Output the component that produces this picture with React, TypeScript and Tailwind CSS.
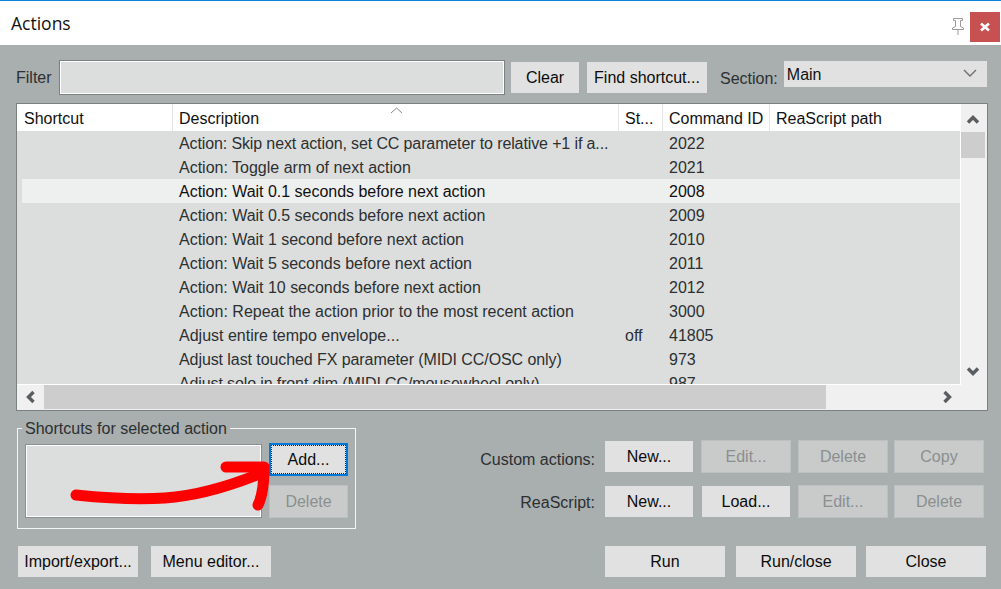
const rows = [
  { desc: "Action: Skip next action, set CC parameter to relative +1 if a...", state: "", id: "2022", fit: "tracking-[-0.12px]" },
  { desc: "Action: Toggle arm of next action", state: "", id: "2021", fit: "" },
  { desc: "Action: Wait 0.1 seconds before next action", state: "", id: "2008", fit: "tracking-[-0.02px]", selected: true },
  { desc: "Action: Wait 0.5 seconds before next action", state: "", id: "2009", fit: "tracking-[-0.02px]" },
  { desc: "Action: Wait 1 second before next action", state: "", id: "2010", fit: "tracking-[-0.02px]" },
  { desc: "Action: Wait 5 seconds before next action", state: "", id: "2011", fit: "tracking-[-0.02px]" },
  { desc: "Action: Wait 10 seconds before next action", state: "", id: "2012", fit: "tracking-[-0.02px]" },
  { desc: "Action: Repeat the action prior to the most recent action", state: "", id: "3000", fit: "" },
  { desc: "Adjust entire tempo envelope...", state: "off", id: "41805", fit: "" },
  { desc: "Adjust last touched FX parameter (MIDI CC/OSC only)", state: "", id: "973", fit: "tracking-[-0.08px]" },
  { desc: "Adjust solo in front dim (MIDI CC/mousewheel only)", state: "", id: "987", fit: "tracking-[-0.12px]" },
];

function Btn({ label, disabled, className }: { label: string; disabled?: boolean; className: string }) {
  return (
    <button
      className={
        disabled
          ? `flex h-[33px] items-center justify-center border border-[#bcc0c0] bg-[#c9cbcb] text-[#8b8f8f] ${className}`
          : `flex h-[33px] items-center justify-center border border-[#a9aeae] bg-[#e1e1e1] text-[#0c0c0c] ${className}`
      }
    >
      {label}
    </button>
  );
}

function Chevron({ dir }: { dir: "up" | "down" | "left" | "right" }) {
  const points = {
    up: "2,9.500 7,4.500 12,9.500",
    down: "2,4.500 7,9.500 12,4.500",
    left: "9.500,2 4.500,7 9.500,12",
    right: "4.500,2 9.500,7 4.500,12",
  }[dir];
  return (
    <svg width="14" height="14" viewBox="0 0 14 14" fill="none" stroke="#5a5e60" strokeWidth="3.400">
      <polyline points={points} />
    </svg>
  );
}

export default function App() {
  return (
    <div className="relative flex h-[589px] w-[1001px] flex-col overflow-hidden bg-[#a9aeae] font-['Liberation_Sans',Arial,sans-serif] text-[16px] text-[#2c3032]">
      {/* title bar */}
      <header className="flex h-[45px] shrink-0 items-center border-t border-[#0a84d8] bg-white">
        <span className="ml-[11px] font-['Open_Sans',sans-serif] text-[17.500px] text-[#111]">Actions</span>
        <svg className="ml-auto mt-[7px]" width="16" height="17" viewBox="0 0 16 17" fill="#fff" stroke="#9a9a9a">
          <path d="M3.500 0.500h9v2h-2v6l3 1.500v1.500h-11v-1.500l3-1.500v-6h-2z" />
          <path d="M8 11.500v5.500" />
        </svg>
        <div className="ml-[4px] mr-[1px] mt-[7px] flex h-[30px] w-[30px] items-center justify-center bg-[#c75050]">
          <svg width="10" height="10" viewBox="0 0 10 10" stroke="#fff" strokeWidth="2.600">
            <path d="M1 1.500l8 7M9 1.500l-8 7" />
          </svg>
        </div>
      </header>

      <main className="flex flex-1 flex-col pl-[16px] pr-[13px] pt-[15px]">
        {/* filter row */}
        <div className="flex h-[35px] items-center">
          <span className="w-[43px] pt-[1px]">Filter</span>
          <input className="h-[35px] w-[446px] border border-[#7b8181] bg-[#dcdedd] shadow-[inset_0_0_0_1px_#fff]" />
          <Btn label="Clear" className="ml-[5px] w-[70px]" />
          <Btn label="Find shortcut..." className="ml-[6px] w-[122px]" />
          <span className="ml-[12px] pt-[2px]">Section:</span>
          <div className="ml-[6px] mb-[8px] flex h-[26px] w-[203px] items-center justify-between bg-[#e1e1e1] pl-[3px] pr-[10px] text-[#111]">
            <span className="pt-[2px]">Main</span>
            <svg width="14" height="9" viewBox="0 0 14 9" fill="none" stroke="#6a6e70" strokeWidth="1.400">
              <path d="M1 1l6 6 6-6" />
            </svg>
          </div>
        </div>

        {/* action list */}
        <section className="relative mt-[8px] h-[308px] w-[972px] border border-[#7b8181] bg-white">
          <div className="flex h-[281px]">
            <div className="flex w-[944px] flex-col border-r border-white">
              <div className="grid h-[27px] shrink-0 grid-cols-[156px_446px_44px_107px_1fr] items-center text-[#111]">
                <span className="h-full border-r border-[#e5e5e5] pl-[7px] leading-[29px]">Shortcut</span>
                <span className="h-full border-r border-[#e5e5e5] pl-[6px] leading-[29px]">Description</span>
                <span className="h-full border-r border-[#e5e5e5] pl-[6px] leading-[29px]">St...</span>
                <span className="h-full border-r border-[#e5e5e5] pl-[6px] leading-[29px]">Command ID</span>
                <span className="h-full pl-[6px] leading-[29px]">ReaScript path</span>
              </div>
              <div className="flex-1 overflow-hidden border-b border-white bg-[#dcdedd] pl-[5px]">
                {rows.map((row) => (
                  <div
                    key={row.id}
                    className={
                      row.selected
                        ? "grid h-[24px] grid-cols-[151px_446px_44px_107px_1fr] items-center bg-[#eeefef] pt-[1px] text-[#111]"
                        : "grid h-[24px] grid-cols-[151px_446px_44px_107px_1fr] items-center pt-[1px]"
                    }
                  >
                    <span />
                    <span className={`whitespace-nowrap pl-[6px] ${row.fit}`}>{row.desc}</span>
                    <span className="pl-[6px]">{row.state}</span>
                    <span className="pl-[6px]">{row.id}</span>
                    <span />
                  </div>
                ))}
              </div>
            </div>
            <div className="flex flex-1 flex-col bg-[#f0f0f0]">
              <div className="flex h-[28px] w-[24px] items-center justify-center pt-[4px]">
                <Chevron dir="up" />
              </div>
              <div className="h-[26px] w-[24px] bg-[#cdcdcd]" />
              <div className="mt-auto flex h-[27px] w-[24px] items-center justify-center pb-[2px]">
                <Chevron dir="down" />
              </div>
            </div>
          </div>
          <div className="flex h-[25px] bg-[#f0f0f0]">
            <div className="flex h-[24px] w-[27px] items-center justify-center">
              <Chevron dir="left" />
            </div>
            <div className="h-[24px] w-[782px] bg-[#cdcdcd]" />
            <div className="ml-auto mr-[27px] flex h-[24px] w-[27px] items-center justify-center">
              <Chevron dir="right" />
            </div>
          </div>
          {/* sort caret */}
          <svg className="absolute left-[373px] top-[3px]" width="13" height="7" viewBox="0 0 13 7" fill="none" stroke="#8a8a8a">
            <path d="M1 6l5.500-5 5.500 5" />
          </svg>
        </section>

        {/* lower panels */}
        <div className="flex">
          <fieldset className="ml-[1px] mt-[8px] h-[110px] w-[339px] border border-[#f4f5f5]">
            <legend className="ml-[4px] px-[3px] pt-[2px] leading-[16px]">Shortcuts for selected action</legend>
            <div className="flex pl-[7px] pt-[6px]">
              <div className="ml-[1px] mt-[2px] h-[72px] w-[235px] border border-white bg-[#dcdedd] shadow-[0_0_0_1px_#8a9090]" />
              <div className="ml-[8px] flex flex-col">
                <button className="h-[33px] w-[79px] border-2 border-[#0078d7] bg-[#e1e1e1] text-[#0c0c0c] outline-1 outline-dotted outline-offset-[-3px] outline-[#222]">
                  Add...
                </button>
                <Btn label="Delete" disabled className="mt-[9px] w-[79px]" />
              </div>
            </div>
          </fieldset>
          <div className="ml-auto mr-[4px] flex flex-col gap-[12px] pt-[29px]">
            <div className="flex items-start">
              <span className="mr-[9px] mt-[8px]">Custom actions:</span>
              <Btn label="New..." className="w-[90px]" />
              <Btn label="Edit..." disabled className="ml-[7px] w-[90px]" />
              <Btn label="Delete" disabled className="ml-[7px] w-[90px]" />
              <Btn label="Copy" disabled className="ml-[6px] w-[90px]" />
            </div>
            <div className="flex items-start justify-end">
              <span className="mr-[9px] mt-[6px]">ReaScript:</span>
              <Btn label="New..." className="w-[90px]" />
              <Btn label="Load..." className="ml-[7px] w-[90px]" />
              <Btn label="Edit..." disabled className="ml-[7px] w-[90px]" />
              <Btn label="Delete" disabled className="ml-[6px] w-[90px]" />
            </div>
          </div>
        </div>

        {/* bottom buttons */}
        <div className="mr-[1px] mt-[16px] flex">
          <Btn label="Import/export..." className="ml-[1px] w-[122px]" />
          <Btn label="Menu editor..." className="ml-[11px] w-[122px]" />
          <Btn label="Run" className="ml-auto w-[122px]" />
          <Btn label="Run/close" className="ml-[9px] w-[122px]" />
          <Btn label="Close" className="ml-[8px] w-[122px]" />
        </div>
      </main>

      {/* hand-drawn red arrow on top of the screenshot */}
      <svg className="pointer-events-none absolute left-0 top-0" width="1001" height="589" viewBox="0 0 1001 589" fill="none" stroke="#fe0000" strokeWidth="11" strokeLinecap="round" strokeLinejoin="round">
        <path d="M76 495C105 498 135 500 165 498C195 496 225 488 262 473" />
        <path d="M226 467L264 467C264 480 263 495 258 505" />
      </svg>
    </div>
  );
}
